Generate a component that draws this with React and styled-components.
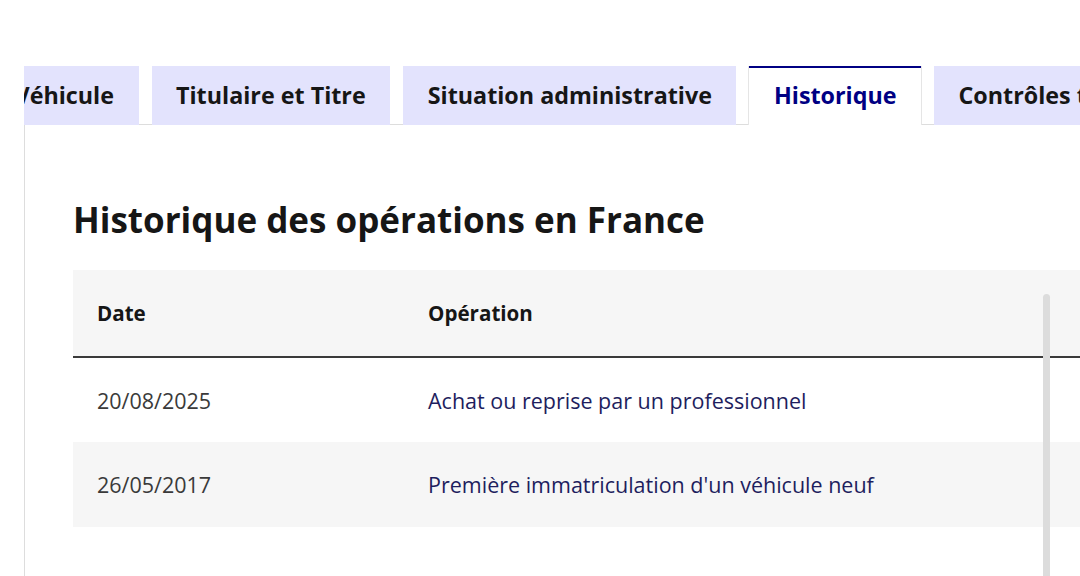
import styled, { createGlobalStyle } from 'styled-components'

const GlobalStyle = createGlobalStyle`
  body {
    margin: 0;
    background: #fff;
    font-family: "Open Sans", "Noto Sans", sans-serif;
    color: #161616;
    overflow: hidden;
  }
`

const tabs = [
  { label: 'Véhicule' },
  { label: 'Titulaire et Titre' },
  { label: 'Situation administrative' },
  { label: 'Historique', active: true },
  { label: 'Contrôles techniques' },
]

const operations = [
  { date: '20/08/2025', label: 'Achat ou reprise par un professionnel' },
  { date: '26/05/2017', label: "Première immatriculation d'un véhicule neuf" },
]

const App = () => {
  return (
    <Page>
      <GlobalStyle />
      <TabsClip>
        <TabList>
          {tabs.map((tab) => (
            <Tab key={tab.label} $active={tab.active}>
              {tab.label}
            </Tab>
          ))}
        </TabList>
      </TabsClip>
      <Panel>
        <Title>Historique des opérations en France</Title>
        <TableWrap>
          <Table>
            <thead>
              <tr>
                <Th $w="283px">Date</Th>
                <Th>Opération</Th>
              </tr>
            </thead>
            <tbody>
              {operations.map((op, i) => (
                <Row key={op.date} $odd={i % 2 === 1}>
                  <DateCell>{op.date}</DateCell>
                  <OpCell>{op.label}</OpCell>
                </Row>
              ))}
            </tbody>
          </Table>
          <ScrollThumb />
        </TableWrap>
      </Panel>
    </Page>
  )
}

const Page = styled.div`
  padding-top: 66px;
  padding-left: 24px;
  width: 1200px;
`

const TabsClip = styled.div`
  overflow: hidden;
  width: 1056px;
`

const TabList = styled.div`
  display: flex;
  gap: 13px;
  margin-left: -34px;
  height: 59px;
  align-items: stretch;
`

const Tab = styled.div`
  flex: none;
  display: flex;
  align-items: center;
  padding: 0 24.5px 3px;
  font-size: 23.3px;
  font-weight: 700;
  white-space: nowrap;
  box-sizing: border-box;
  background: ${(p) => (p.$active ? '#fff' : '#e3e3fd')};
  color: ${(p) => (p.$active ? '#000083' : '#161616')};
  border-top: 2px solid ${(p) => (p.$active ? '#000083' : 'transparent')};
  box-shadow: ${(p) =>
    p.$active
      ? '-1px 0 0 #e5e5e5, 1px 0 0 #e5e5e5'
      : '0 1px 0 #ddd'};
`

const Panel = styled.div`
  border-left: 1px solid #ddd;
  border-top: 1px solid #ddd;
  padding: 73px 0 0 48px;
  height: 460px;
  margin-top: -1px;
`

const Title = styled.h2`
  margin: 0 0 28px;
  font-size: 35px;
  line-height: 44px;
  font-weight: 700;
  color: #161616;
`

const TableWrap = styled.div`
  position: relative;
  width: 1100px;
`

const Table = styled.table`
  width: 100%;
  border-collapse: collapse;
  font-size: 21.5px;
`

const Th = styled.th`
  width: ${(p) => p.$w || 'auto'};
  height: 86px;
  padding: 0 24px;
  text-align: left;
  font-size: 20.6px;
  font-weight: 700;
  background: #f6f6f6;
  border-bottom: 2px solid #3a3a3a;
  color: #161616;
`

const Row = styled.tr`
  height: 85px;
  background: ${(p) => (p.$odd ? '#f6f6f6' : '#fff')};
`

const DateCell = styled.td`
  padding: 0 24px;
  color: #3a3a3a;
`

const OpCell = styled.td`
  padding: 0 24px;
  color: #1e1e5e;
`

const ScrollThumb = styled.div`
  position: absolute;
  left: 970px;
  top: 24px;
  width: 7px;
  height: 320px;
  border-radius: 4px 4px 0 0;
  background: #dcdcdc;
`

export default App
